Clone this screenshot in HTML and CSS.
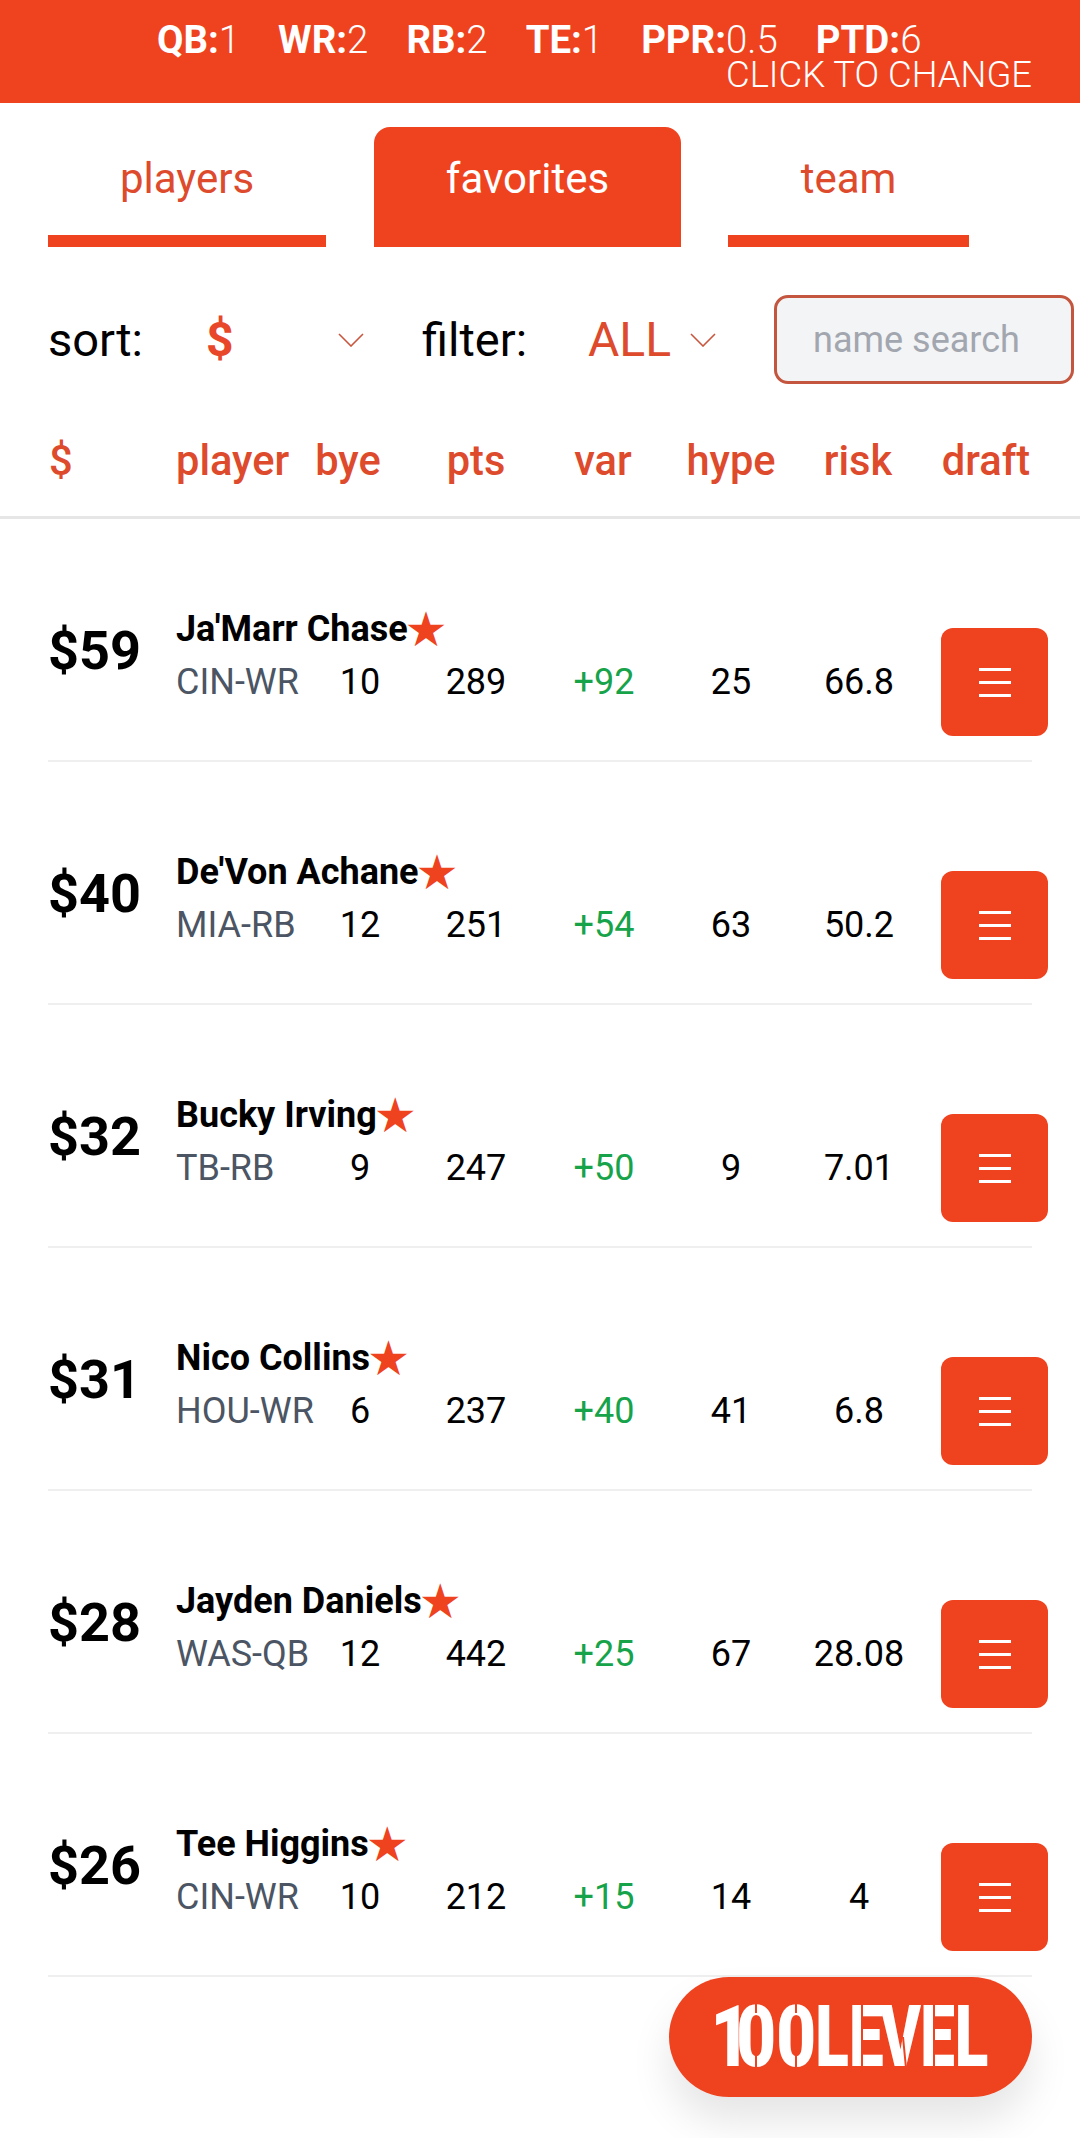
FILE: index.html
```html
<!DOCTYPE html>
<html lang="en">
<head>
<meta charset="utf-8">
<title>100LEVEL</title>
<link rel="stylesheet" href="styles.css">
</head>
<body>
<div class="page">
  <header class="settings">
    <div class="settings-line">
      <span><b>QB:</b>1</span><span><b>WR:</b>2</span><span><b>RB:</b>2</span><span><b>TE:</b>1</span><span><b>PPR:</b>0.5</span><span><b>PTD:</b>6</span>
    </div>
    <div class="settings-hint">CLICK TO CHANGE</div>
  </header>

  <nav class="tabs">
    <div class="tab tab-players">players</div>
    <div class="tab tab-favorites active">favorites</div>
    <div class="tab tab-team">team</div>
  </nav>

  <section class="controls">
    <span class="ctl-label sort-label">sort:</span>
    <span class="ctl-value sort-value">$</span>
    <svg class="chev chev-sort" viewBox="0 0 26 14"><path d="M1 1l12 12L25 1"/></svg>
    <span class="ctl-label filter-label">filter:</span>
    <span class="ctl-value filter-value">ALL</span>
    <svg class="chev chev-filter" viewBox="0 0 26 14"><path d="M1 1l12 12L25 1"/></svg>
    <input class="search" type="text" placeholder="name search">
  </section>

  <div class="columns">
    <span class="c-price">$</span><span class="c-player">player</span><span>bye</span><span>pts</span><span>var</span><span>hype</span><span>risk</span><span>draft</span>
  </div>

  <main>
    <article class="row">
      <div class="price">$59</div>
      <div class="name">Ja'Marr Chase<span class="star">★</span></div>
      <div class="team">CIN-WR</div><div class="num">10</div><div class="num">289</div><div class="num var">+92</div><div class="num">25</div><div class="num">66.8</div>
      <button class="draft"><i></i><i></i><i></i></button>
    </article>
    <article class="row">
      <div class="price">$40</div>
      <div class="name">De'Von Achane<span class="star">★</span></div>
      <div class="team">MIA-RB</div><div class="num">12</div><div class="num">251</div><div class="num var">+54</div><div class="num">63</div><div class="num">50.2</div>
      <button class="draft"><i></i><i></i><i></i></button>
    </article>
    <article class="row">
      <div class="price">$32</div>
      <div class="name">Bucky Irving<span class="star">★</span></div>
      <div class="team">TB-RB</div><div class="num">9</div><div class="num">247</div><div class="num var">+50</div><div class="num">9</div><div class="num">7.01</div>
      <button class="draft"><i></i><i></i><i></i></button>
    </article>
    <article class="row">
      <div class="price">$31</div>
      <div class="name">Nico Collins<span class="star">★</span></div>
      <div class="team">HOU-WR</div><div class="num">6</div><div class="num">237</div><div class="num var">+40</div><div class="num">41</div><div class="num">6.8</div>
      <button class="draft"><i></i><i></i><i></i></button>
    </article>
    <article class="row">
      <div class="price">$28</div>
      <div class="name">Jayden Daniels<span class="star">★</span></div>
      <div class="team">WAS-QB</div><div class="num">12</div><div class="num">442</div><div class="num var">+25</div><div class="num">67</div><div class="num">28.08</div>
      <button class="draft"><i></i><i></i><i></i></button>
    </article>
    <article class="row">
      <div class="price">$26</div>
      <div class="name">Tee Higgins<span class="star">★</span></div>
      <div class="team">CIN-WR</div><div class="num">10</div><div class="num">212</div><div class="num var">+15</div><div class="num">14</div><div class="num">4</div>
      <button class="draft"><i></i><i></i><i></i></button>
    </article>
  </main>

  <div class="logo">
    <svg viewBox="0 0 363 120" width="363" height="120">
      <g transform="translate(0 89) scale(.8 1)">
        <text class="logo-text" x="52 84 134" y="0">100</text>
      </g>
      <g transform="translate(0 89) scale(.72 1)">
        <text class="logo-text" x="203 250 293 349 397" y="0">LEVEL</text>
      </g>
      <path class="logo-cut" d="M87 26v10M87 78v13M127 26v10M127 78v13M193 26v65M265 26v65M234 60l3 31"/>
    </svg>
  </div>
</div>
</body>
</html>
```
FILE: styles.css
```css
* { box-sizing: border-box; }
html, body { margin: 0; padding: 0; background: #fff; }
body { font-family: Roboto, "Noto Sans", sans-serif; color: #000; }
.page { position: relative; width: 1080px; height: 2138px; overflow: hidden; }

.settings { height: 103px; background: #ef4320; color: #fff; padding: 22px 48px 0 0; }
.settings-line { display: flex; justify-content: flex-start; gap: 38px; padding-left: 157px; font-size: 38.4px; line-height: 36px; }
.settings-line b { font-weight: 700; }
.settings-line span { font-weight: 300; }
.settings-hint { text-align: right; font-size: 36.4px; line-height: 34px; font-weight: 300; }

.tabs { display: flex; align-items: flex-end; height: 144px; padding-left: 48px; }
.tab { font-size: 42px; color: #de4a2c; text-align: center; height: 120px; border-bottom: 12px solid #ef4320; line-height: 104px; font-weight: 400; }
.tab-players { width: 278px; margin-right: 48px; }
.tab-favorites { width: 307px; margin-right: 47px; }
.tab-team { width: 241px; }
.tab.active { background: #ef4320; color: #fff; border-radius: 16px 16px 0 0; }

.controls { display: flex; align-items: center; height: 138px; padding: 48px 0 1px 48px; }
.ctl-label { font-size: 47px; font-weight: 400; }
.sort-label { width: 158px; }
.sort-value { width: 132px; color: #e8472a; font-weight: 700; font-size: 48px; }
.filter-label { width: 166px; margin-left: 58px; }
.filter-value { width: 102px; color: #de4a2c; font-size: 48px; }
.chev { width: 26px; height: 14px; fill: none; stroke: #c9573f; stroke-width: 1.6; }
.search { width: 300px; height: 89px; margin-left: 58px; border: 3px solid #c4563f; border-radius: 14px; background: #f3f4f6; padding: 0 0 0 36px; font: 400 36px Roboto, sans-serif; color: #111; outline: none; }
.search::placeholder { color: #a2a6af; opacity: 1; }

.columns { display: grid; grid-template-columns: 127px 126px 92px 164px 90px 166px 88px 168px; align-items: center; height: 134px; padding: 20px 0 0 49px; border-bottom: 3px solid #e6e6e6; color: #de4a2c; font-size: 41.6px; font-weight: 500; }
.columns span { text-align: center; }
.columns .c-price, .columns .c-player { text-align: left; }

.row { display: grid; grid-template-columns: 128px 144px 80px 152px 104px 150px 106px 29px 107px; grid-template-rows: 48px 83px; height: 243px; margin: 0 48px; padding-top: 86px; border-bottom: 2px solid #efefef; }
.price { grid-row: 1 / 3; grid-column: 1; font-size: 54px; line-height: 92px; font-weight: 700; }
.name { grid-row: 1; grid-column: 2 / 9; font-size: 36px; line-height: 48px; font-weight: 700; display: flex; align-items: center; }
.star { color: #ef4320; font-size: 48px; line-height: 46px; margin-left: -3px; font-family: "DejaVu Sans", sans-serif; }
.team { grid-row: 2; grid-column: 2; font-size: 36px; line-height: 58px; color: #4b5563; }
.num { grid-row: 2; font-size: 36px; line-height: 58px; text-align: center; }
.var { color: #16a34a; }
.draft { grid-row: 1 / 3; grid-column: 9; align-self: end; display: flex; flex-direction: column; align-items: center; justify-content: center; gap: 10px; width: 107px; height: 108px; padding: 0; border: 0; border-radius: 12px; background: #ef4320; }
.draft i { display: block; width: 32px; height: 3px; background: #fff; }

.logo { position: absolute; left: 669px; top: 1977px; width: 363px; height: 120px; border-radius: 60px; background: #ef4320; box-shadow: 0 25px 40px rgba(0,0,0,.1); }
.logo svg { display: block; }
.logo-text { fill: #fff; font-family: Roboto, sans-serif; font-weight: 900; font-size: 86px; }
.logo-cut { fill: none; stroke: #ef4320; stroke-width: 2; }
```
